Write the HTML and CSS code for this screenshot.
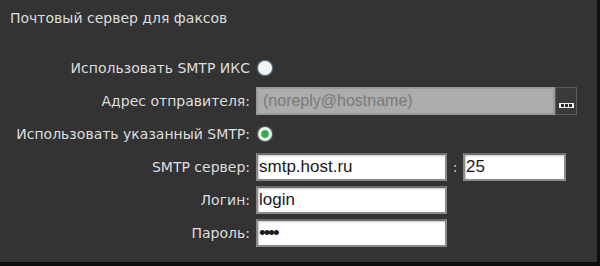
FILE: index.html
```html
<!DOCTYPE html>
<html lang="ru">
<head>
<meta charset="UTF-8">
<title>Почтовый сервер для факсов</title>
<link rel="stylesheet" href="styles.css">
</head>
<body>
<div class="panel">
  <div class="title">Почтовый сервер для факсов</div>
  <div class="form">
    <label class="label">Использовать SMTP ИКС</label>
    <div class="field"><span class="radio"></span></div>

    <label class="label">Адрес отправителя:</label>
    <div class="field">
      <div class="input input-disabled">(noreply@hostname)</div>
      <div class="browse"><span class="dots"><i></i><i></i><i></i></span></div>
    </div>

    <label class="label">Использовать указанный SMTP:</label>
    <div class="field"><span class="radio radio-on"></span></div>

    <label class="label">SMTP сервер:</label>
    <div class="field">
      <div class="input">smtp.host.ru</div>
      <span class="colon">:</span>
      <div class="input input-port">25</div>
    </div>

    <label class="label">Логин:</label>
    <div class="field"><div class="input">login</div></div>

    <label class="label">Пароль:</label>
    <div class="field"><div class="input input-pass">&#8226;&#8226;&#8226;&#8226;</div></div>
  </div>
</div>
</body>
</html>
```
FILE: styles.css
```css
html, body {
  margin: 0;
  height: 100%;
  background: #0e0e0e;
}
.panel {
  box-sizing: border-box;
  width: 597px;
  height: 262px;
  background: #333333;
  font-family: "DejaVu Sans", sans-serif;
  font-size: 14px;
  color: #dedede;
  padding: 10px 0 0 10px;
}
.title {
  line-height: 16px;
}
.form {
  display: grid;
  grid-template-columns: 240px 1fr;
  grid-auto-rows: 33px;
  column-gap: 6px;
  margin-top: 25px;
}
.label {
  display: flex;
  align-items: center;
  justify-content: flex-end;
}
.field {
  display: flex;
  align-items: center;
}
.radio {
  width: 14px;
  height: 14px;
  border-radius: 50%;
  background: #f2f4f7;
  margin-left: 2px;
  box-shadow: 0 0 1px 1px #5f7f96;
}
.radio-on {
  background: radial-gradient(circle, #2faa48 0 3px, #9bd8a4 4px, #f2f7f2 5px);
  box-shadow: 0 0 1px 1px #4d6c5a;
}
.input {
  box-sizing: border-box;
  width: 191px;
  height: 28px;
  background: #ffffff;
  border: 2px solid #8a8a8a;
  border-top-color: #6e6e6e;
  box-shadow: inset 1px 1px 2px #c8c8c8;
  color: #1a1a1a;
  font-family: "Liberation Sans", sans-serif;
  font-size: 17px;
  line-height: 24px;
  padding-left: 1px;
}
.input-disabled {
  width: 299px;
  background: #acacac;
  border-color: #9a9a9a;
  box-shadow: none;
  color: #7a7a7a;
  font-size: 16px;
  padding-left: 5px;
}
.input-port {
  width: 103px;
}
.input-pass {
  font-size: 19px;
  letter-spacing: -2px;
}
.colon {
  width: 16px;
  text-align: center;
  color: #cfcfcf;
}
.browse {
  box-sizing: border-box;
  width: 22px;
  height: 28px;
  background: #3a3a3a;
  border: 1px solid #5a5a5a;
  display: flex;
  align-items: flex-end;
  justify-content: center;
  padding-bottom: 6px;
}
.dots {
  display: flex;
  gap: 1px;
  background: #f0f0f0;
  padding: 1px 2px;
}
.dots i {
  width: 3px;
  height: 3px;
  background: #2a2a2a;
}
```
